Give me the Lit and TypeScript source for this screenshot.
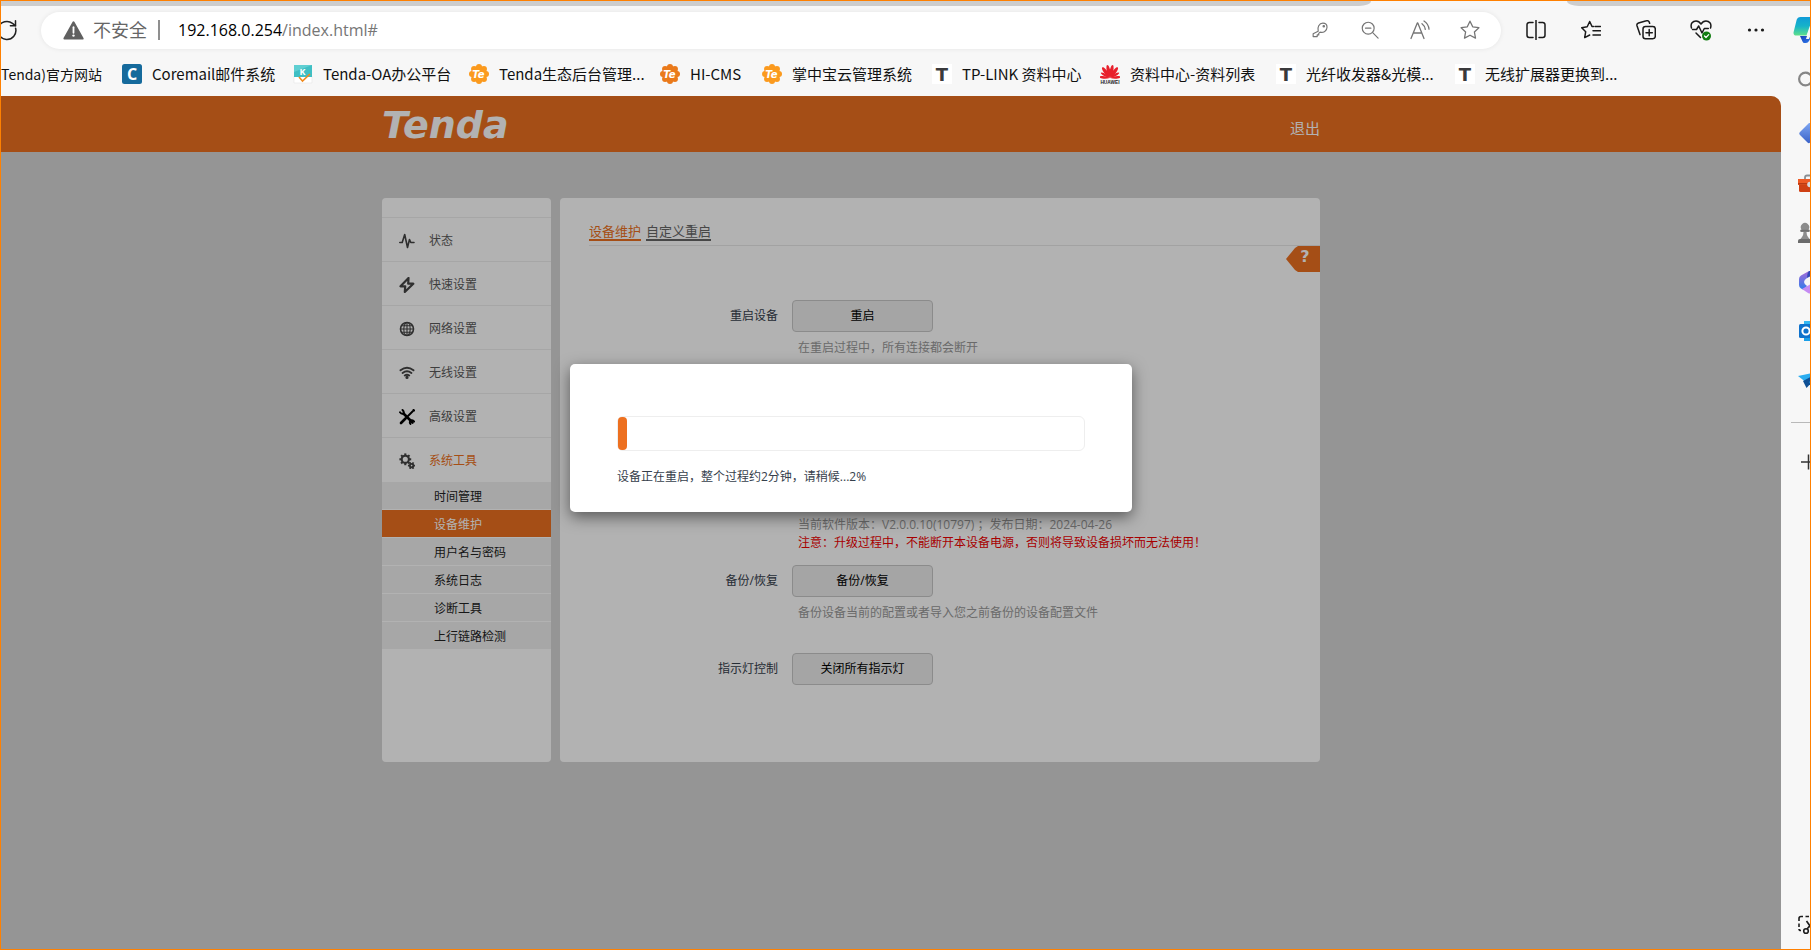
import { LitElement, html, css, svg, nothing } from "lit";
import { customElement, property, state } from "lit/decorators.js";
import { classMap } from "lit/directives/class-map.js";
import { styleMap } from "lit/directives/style-map.js";

/* ---------- shared base ---------- */

const base = css`
  * {
    box-sizing: border-box;
  }
  button {
    font: inherit;
    color: inherit;
    margin: 0;
    padding: 0;
    border: 0;
    background: none;
    cursor: pointer;
  }
  a {
    color: inherit;
    text-decoration: none;
  }
  svg {
    display: block;
    flex: none;
  }
`;

/* ---------- toolbar icons ---------- */

const line = (body: unknown, size = 20, width = 1.3) => html`<svg
  width=${size}
  height=${size}
  viewBox="0 0 20 20"
  fill="none"
  stroke="currentColor"
  stroke-width=${width}
  stroke-linecap="round"
  stroke-linejoin="round"
  aria-hidden="true"
>
  ${body}
</svg>`;

const icons = {
  refresh: html`<svg width="17" height="22" viewBox="5 0 17 22" fill="none" stroke="#222" stroke-width="1.5" stroke-linecap="round" aria-hidden="true">
    <path d="M19.6 9.2A9 9 0 1 1 16.5 4.4L19.4 6.6" />
    <path d="M19.5 1.8V6.7H14.4" />
  </svg>`,
  warning: html`<svg width="21" height="19" viewBox="0 0 21 19" aria-hidden="true">
    <path d="M10.5 1.3 19.6 17.6H1.4Z" fill="#606060" stroke="#606060" stroke-width="2" stroke-linejoin="round" />
    <path d="M10.5 6.2v5.6" stroke="#fff" stroke-width="1.8" stroke-linecap="round" />
    <circle cx="10.5" cy="14.6" r="1.2" fill="#fff" />
  </svg>`,
  key: line(
    svg`<path d="M8 11.4C6.8 7 9 2.4 13.2 2.4c2.700 0 4.600 1.900 4.600 4.500 0 4.200-4.200 6.500-7.700 5.500L8.600 13.800v1.700H6.900v1.800H2.400v-3.100z"/><circle cx="14.200" cy="5.900" r=".8"/>`,
    18,
  ),
  zoomOut: line(svg`<circle cx="8" cy="8" r="6.600"/><path d="M5 8h6M13 13l6 6"/>`, 18),
  readAloud: line(
    svg`<path d="M1 18.500 7.300 3h.5L14 18.500M3.200 13h8.600M12 3.700c2 1.500 3 3.200 3.300 5.600M14 1c3 2 4.700 4.500 5 8.200"/>`,
  ),
  star: line(
    svg`<path d="m10 1.200 2.700 5.600 6.200.9-4.500 4.300 1.100 6.100L10 15.200l-5.500 2.900L5.600 12 1.100 7.700l6.200-.9z"/>`,
  ),
  split: line(
    svg`<path d="M10 .5v19M7 2.500H3.200A2.200 2.200 0 0 0 1 4.700v10.600a2.200 2.200 0 0 0 2.200 2.200H7M13 2.500h3.800A2.200 2.200 0 0 1 19 4.700v10.600a2.200 2.200 0 0 1-2.200 2.200H13"/>`,
    20,
    1.5,
  ),
  favorites: line(
    svg`<path d="M12.500 6.500H11L8.700 1.500 6.200 6.800.7 7.700l4 4-1 5.900 5-2.600"/><path d="M14 6.500h5.500M12 10.800h7.500M12 15h7.500"/>`,
    20,
    1.5,
  ),
  collections: line(
    svg`<rect x="7" y="6.500" width="12.300" height="12.300" rx="2.500"/><path d="M13.200 9.500v6.300M10 12.700h6.300M4 14.600 1 5.800A2.300 2.300 0 0 1 2.500 3L10.400.8a2.300 2.300 0 0 1 2.900 1.500l.3 1"/>`,
    20,
    1.5,
  ),
  health: html`<svg width="22" height="22" viewBox="0 0 22 22" fill="none" stroke="currentColor" stroke-width="1.500" stroke-linecap="round" stroke-linejoin="round" aria-hidden="true">
    <path d="M1.500 9C0 4.500 3 2 6 2c2 0 3.700 1 5 3 1.300-2 3-3 5-3 3 0 6 2.500 4.500 7" />
    <path d="M2.500 10.500h4l2.200-3.500 3.300 7 2.300-4.500h4M6 14l4.500 4.500" />
    <circle cx="16.500" cy="17" r="4.500" fill="#107c10" stroke="none" />
    <path d="m14.500 17 1.500 1.500 2.700-2.800" stroke="#fff" stroke-width="1.200" />
  </svg>`,
  more: html`<svg width="20" height="20" viewBox="0 0 20 20" fill="currentColor" aria-hidden="true">
    <circle cx="3.500" cy="10" r="1.600" /><circle cx="10" cy="10" r="1.600" /><circle cx="16.500" cy="10" r="1.600" />
  </svg>`,
  copilot: html`<svg width="28" height="28" viewBox="0 0 28 28" aria-hidden="true">
    <defs>
      <linearGradient id="cpA" x1="0" y1="0" x2="0" y2="1">
        <stop offset="0" stop-color="#0f9bd8" /><stop offset=".5" stop-color="#16b3c9" /><stop offset="1" stop-color="#5fe08a" />
      </linearGradient>
      <linearGradient id="cpB" x1="0" y1="0" x2="1" y2="1">
        <stop offset="0" stop-color="#1b3fb5" /><stop offset="1" stop-color="#2c7cf0" />
      </linearGradient>
    </defs>
    <path d="M7 20h12l-3 5q-1 2-3 2h-1.500q-1.500 0-2-1.500z" fill="url(#cpB)" />
    <path d="M7.500 1H20l-6.500 18.500H3.500Q0 19.500.6 16L3.600 4Q4.500 1 7.500 1z" fill="url(#cpA)" />
    <path d="M18 8l-5 15h3l6-15z" fill="#f7f7f7" />
  </svg>`,
};

/* ---------- bookmark icons ---------- */

const petals = (n: number, r: number) =>
  Array.from({ length: n }, (_, i) => {
    const a = (i / n) * Math.PI * 2 - Math.PI / 2;
    return svg`<circle cx=${10 + r * Math.cos(a)} cy=${10 + r * Math.sin(a)} r="3"/>`;
  });

const tendaBadge = (color: string) => html`<svg width="20" height="20" viewBox="0 0 20 20" aria-hidden="true">
  <g fill=${color}><circle cx="10" cy="10" r="8" />${petals(8, 7)}</g>
  <text x="9.500" y="14" text-anchor="middle" font-family="DejaVu Sans" font-size="10" font-weight="700" font-style="italic" fill="#fff">Te</text>
</svg>`;

const favicons: Record<string, unknown> = {
  coremail: html`<svg width="20" height="20" viewBox="0 0 20 20" aria-hidden="true">
    <rect width="20" height="20" rx="2.500" fill="#156a9c" />
    <text x="10" y="15.500" text-anchor="middle" font-family="Open Sans" font-size="16" font-weight="700" fill="#fff">C</text>
  </svg>`,
  oa: html`<svg width="20" height="20" viewBox="0 0 20 20" aria-hidden="true">
    <path d="M1 12h18v7H1z" fill="#fff" stroke="#e6e6e6" stroke-width=".6" />
    <path d="M1 1h18v12H1z" fill="#3fbfc4" />
    <path d="M1 1h18L1 8z" fill="#5fcfd2" />
    <text x="9.500" y="10.500" text-anchor="middle" font-family="Open Sans" font-size="9" font-weight="700" fill="#fff">K</text>
    <path d="m6 13 3.500 4L17 10" fill="none" stroke="#f08a1d" stroke-width="1.600" />
  </svg>`,
  tenda: tendaBadge("#fb9a1e"),
  hicms: tendaBadge("#ea7a1b"),
  tplink: html`<svg width="20" height="20" viewBox="0 0 20 20" aria-hidden="true">
    <rect width="20" height="20" fill="#fff" />
    <text x="10" y="16.500" text-anchor="middle" font-family="DejaVu Sans" font-size="18" font-weight="700" fill="#3a3a3c">T</text>
  </svg>`,
  huawei: html`<svg width="20" height="20" viewBox="0 0 20 20" aria-hidden="true">
    <g fill="#e8202c">
      ${[-84, -60, -36, -12, 12, 36, 60, 84].map(
        (a) => svg`<path d="M10 13.800C8 9.500 7.800 4.500 9.100 1.500Q10 0 10.900 1.500C12.200 4.500 12 9.500 10 13.800z" transform=${`rotate(${a} 10 14) ${Math.abs(a) > 50 ? "translate(2 2.8) scale(.8)" : ""}`} />`,
      )}
    </g>
    <text x="10" y="20" text-anchor="middle" font-family="Liberation Sans" font-size="4.800" font-weight="700" fill="#222">HUAWEI</text>
  </svg>`,
};

/* ---------- browser chrome ---------- */

@customElement("browser-toolbar")
class BrowserToolbar extends LitElement {
  static styles = [
    base,
    css`
      :host {
        display: block;
        font-family: "Open Sans", "Noto Sans CJK SC", sans-serif;
      }
      .tabs {
        display: flex;
        height: 5px;
      }
      .tabs-left,
      .tabs-right {
        background: #cdcdcd;
      }
      .tabs-left {
        flex: 1;
        border-bottom-right-radius: 12px 5px;
      }
      .tabs-active {
        width: 196px;
      }
      .tabs-right {
        width: 243px;
        border-bottom-left-radius: 12px 5px;
      }
      .bar {
        display: flex;
        align-items: center;
        height: 48px;
        overflow: hidden;
      }
      .reload {
        width: 40px;
        flex: none;
      }
      .address {
        flex: 1;
        min-width: 0;
        height: 37px;
        display: flex;
        align-items: center;
        padding: 0 6px 0 22px;
        border-radius: 19px;
        background: #fff;
        box-shadow: 0 0 5px rgba(0, 0, 0, 0.08);
      }
      .security {
        display: flex;
        align-items: center;
        gap: 9px;
        color: #666;
        font-size: 18px;
        line-height: 24px;
        white-space: nowrap;
      }
      .divider {
        width: 2px;
        height: 20px;
        margin: 0 18px 0 11px;
        background: #8f8f8f;
      }
      .url {
        flex: 1;
        outline: 0;
        font-size: 16px;
        line-height: 24px;
        color: #000;
        white-space: nowrap;
      }
      .path {
        color: #767676;
      }
      .inner {
        width: 50px;
        display: flex;
        justify-content: center;
        color: #757575;
      }
      .actions {
        display: flex;
        align-items: center;
        margin-left: 7px;
        color: #1a1a1a;
      }
      .action {
        width: 55px;
        display: flex;
        justify-content: center;
      }
      .copilot {
        width: 27px;
        padding-left: 10px;
        overflow: hidden;
      }
    `,
  ];

  render() {
    return html`
      <div class="tabs">
        <div class="tabs-left"></div>
        <div class="tabs-active"></div>
        <div class="tabs-right"></div>
      </div>
      <div class="bar">
        <button class="reload" aria-label="刷新">${icons.refresh}</button>
        <div class="address">
          <button class="security">${icons.warning}<span>不安全</span></button>
          <span class="divider"></span>
          <div class="url" role="textbox" contenteditable="true" spellcheck="false" aria-label="地址栏"><span>192.168.0.254</span><span class="path">/index.html#</span></div>
          <button class="inner" aria-label="密码">${icons.key}</button>
          <button class="inner" aria-label="缩小">${icons.zoomOut}</button>
          <button class="inner" aria-label="朗读">${icons.readAloud}</button>
          <button class="inner" aria-label="收藏">${icons.star}</button>
        </div>
        <div class="actions">
          <button class="action" aria-label="分屏">${icons.split}</button>
          <button class="action" aria-label="收藏夹">${icons.favorites}</button>
          <button class="action" aria-label="集锦">${icons.collections}</button>
          <button class="action" aria-label="浏览器概要">${icons.health}</button>
          <button class="action" aria-label="更多">${icons.more}</button>
          <button class="copilot" aria-label="Copilot">${icons.copilot}</button>
        </div>
      </div>
    `;
  }
}

@customElement("bookmarks-bar")
class BookmarksBar extends LitElement {
  static styles = [
    base,
    css`
      :host {
        display: grid;
        grid-template-columns: 121px 171px 176px 191px 102px 170px 168px 176px 179px 1fr;
        align-items: center;
        height: 42px;
        padding-bottom: 2px;
        overflow: hidden;
        font: 15px/20px "Noto Sans CJK SC", sans-serif;
        color: #111;
      }
      .bookmark {
        display: flex;
        align-items: center;
        gap: 10px;
        min-width: 0;
        white-space: nowrap;
      }
      .clipped {
        justify-content: flex-end;
        padding-right: 20px;
        font-size: 14px;
      }
    `,
  ];

  private items: [string, string][] = [
    ["", "Tenda)官方网站"],
    ["coremail", "Coremail邮件系统"],
    ["oa", "Tenda-OA办公平台"],
    ["tenda", "Tenda生态后台管理..."],
    ["hicms", "HI-CMS"],
    ["tenda", "掌中宝云管理系统"],
    ["tplink", "TP-LINK 资料中心"],
    ["huawei", "资料中心-资料列表"],
    ["tplink", "光纤收发器&光模..."],
    ["tplink", "无线扩展器更换到..."],
  ];

  render() {
    return this.items.map(
      ([icon, label]) => html`<a href="#" class=${classMap({ bookmark: true, clipped: !icon })}>
        ${icon ? favicons[icon] : nothing}<span>${label}</span>
      </a>`,
    );
  }
}

@customElement("browser-rail")
class BrowserRail extends LitElement {
  static styles = [
    base,
    css`
      :host {
        display: flex;
        flex-direction: column;
        width: 29px;
        overflow: hidden;
      }
      .item {
        flex: none;
        height: 49px;
        padding-left: 17px;
        display: flex;
        align-items: center;
      }
      .search {
        margin-bottom: 7px;
      }
      .rule {
        flex: none;
        height: 1px;
        margin: 18px 0 14px 10px;
        background: #b9b9b9;
      }
      .snip {
        margin-top: auto;
      }
    `,
  ];

  private apps: [string, unknown][] = [
    ["购物", svg`<defs><linearGradient id="tag" x1="0" y1="0" x2="0" y2="1"><stop offset="0" stop-color="#7ea6f2"/><stop offset="1" stop-color="#3a62c8"/></linearGradient></defs><path d="M2 9 11 0h11v12L11.500 20Q10.500 20.500 9.500 19.500L2 12Q.5 10.500 2 9z" fill="url(#tag)"/>`],
    ["工具", svg`<path d="M7 7V5.500Q7 3.500 9 3.500h6q2 0 2 2V7" fill="none" stroke="#8a8f94" stroke-width="1.800"/><path d="M0 7h24v6H0z" fill="#ee5a24"/><path d="M1 13h22v5.500Q23 20 21.500 20h-19Q1 20 1 18.500z" fill="#cf4013"/><path d="M0 11h24v1.500H0z" fill="#b93a12"/><circle cx="12" cy="12.500" r="2.800" fill="#d8dadd"/>`],
    ["游戏", svg`<path d="M2 18.500 4 16q1.500-2 1.500-5H3Q1.500 9.500 3.500 8.500a4.200 4.200 0 1 1 7 0q2 1 .5 2.500H8.500q0 3 1.500 5l2 2.500z" fill="#8c8c8c"/><path d="M2.500 8.800h9v1.800h-9z" fill="#6f6f6f"/><path d="M0 20q0-2 2-2h10q2 0 2 2v2H0z" fill="#6b6b6b"/>`],
    ["Microsoft 365", svg`<defs><linearGradient id="mA" x1="0" y1="0" x2="0" y2="1"><stop offset="0" stop-color="#a56cd8"/><stop offset="1" stop-color="#2f7bea"/></linearGradient></defs><path d="M11 1 3 5.500Q1 6.600 1 9v6q0 2 2 3.500l3 1.500 3-4q-3-2-3-4t3-4z" fill="url(#mA)"/><path d="M11 1q-2 2-2 7l5-2.500V1z" fill="#3347b8"/><path d="M4 19l9-5 9 4-8 5q-2 1-4 0z" fill="#c58cf3"/>`],
    ["Outlook", svg`<path d="M6 2h16v20H6z" fill="#1a9fe8"/><path d="M6 2h16v4H6z" fill="#34b8f2"/><rect x="1" y="5" width="14" height="14" rx="1.500" fill="#0f72cc"/><circle cx="8" cy="12" r="3.600" fill="none" stroke="#fff" stroke-width="2"/>`],
    ["Drop", svg`<path d="M0 8 24 3 9 15z" fill="#2badf0"/><path d="M5 13 24 3 8.500 20z" fill="#0e4f94"/><path d="m11 14 13-11-8 17z" fill="#1f8fe0"/>`],
  ];

  render() {
    return html`
      <button class="item search" aria-label="搜索">
        <svg width="24" height="24" viewBox="0 0 24 24" fill="none" stroke="#868686" stroke-width="2.200"><circle cx="7.500" cy="12" r="6.400" /><path d="m12 17 6 6" /></svg>
      </button>
      ${this.apps.map(
        ([name, art]) => html`<button class="item" aria-label=${name}><svg width="24" height="24" viewBox="0 0 24 24">${art}</svg></button>`,
      )}
      <div class="rule"></div>
      <button class="item" aria-label="添加">
        <svg width="24" height="24" viewBox="0 0 24 24" stroke="#333" stroke-width="1.500"><path d="M3 12h15M10.500 4.500v15" /></svg>
      </button>
      <button class="item snip" aria-label="截图">
        <svg width="24" height="24" viewBox="0 0 24 24" fill="none" stroke="#1c1c1c" stroke-width="1.600">
          <path d="M1 8V5.500Q1 3.500 3 3.500h2M7.500 3.500H11M1 10.500V14M1 16q0 1.500 2 1.500M8.500 8l7 10M16 8 9 16" />
          <circle cx="8" cy="18" r="2.300" />
        </svg>
      </button>
    `;
  }
}

/* ---------- router admin page ---------- */

const menuIcon = (body: unknown) => html`<svg width="16" height="16" viewBox="0 0 16 16" fill="none" stroke="#444" stroke-width="1.600" stroke-linejoin="round" stroke-linecap="round" aria-hidden="true">${body}</svg>`;

const cog = (cx: number, cy: number, r: number, teeth: number, w: number) =>
  svg`<circle cx=${cx} cy=${cy} r=${r} stroke-width=${w}/>${Array.from({ length: teeth }, (_, i) => {
    const a = (i / teeth) * Math.PI * 2;
    const p = (k: number) => `${cx + k * Math.cos(a)} ${cy + k * Math.sin(a)}`;
    return svg`<path stroke-linecap="butt" stroke-width=${w} d=${`M${p(r)}L${p(r + w * 1.1)}`}/>`;
  })}`;

interface MenuEntry {
  label: string;
  icon: unknown;
}

@customElement("side-menu")
class SideMenu extends LitElement {
  static styles = [
    base,
    css`
      :host {
        display: block;
        width: 169px;
        flex: none;
        padding-top: 19px;
        border-radius: 4px;
        background: #fff;
        overflow: hidden;
      }
      .entry {
        display: flex;
        align-items: center;
        gap: 14px;
        height: 44px;
        padding: 2px 0 0 17px;
        border-top: 1px solid #eee;
        color: #5a5a5a;
      }
      .open {
        color: #ed7020;
      }
      .sub {
        margin-top: 1px;
      }
      .link {
        display: block;
        height: 28px;
        padding-left: 52px;
        line-height: 30px;
        border-bottom: 1px solid #fff;
        background: #f0f0f0;
        color: #222;
      }
      .current {
        background: #ed7020;
        color: #fff;
      }
    `,
  ];

  private entries: MenuEntry[] = [
    { label: "状态", icon: menuIcon(svg`<path d="M.8 9.500h2.400L5.700 1.500l2.800 13 2-8 1.300 3h3.200"/>`) },
    { label: "快速设置", icon: menuIcon(svg`<path stroke-width="2.200" d="M9.500 1 1.500 9.300h4.700L5.800 15l8.500-8.300H9.200z"/>`) },
    { label: "网络设置", icon: menuIcon(svg`<circle cx="8" cy="8" r="6.500"/><g stroke-width="1.100"><ellipse cx="8" cy="8" rx="3.200" ry="6.500"/><path d="M8 1.500v13M1.500 8h13M2.500 4.700h11M2.500 11.300h11"/></g>`) },
    { label: "无线设置", icon: menuIcon(svg`<path stroke-width="1.900" d="M1.500 5.300q6.500-5 13 0M3.600 8q4.400-3.400 8.800 0M5.800 10.500q2.200-1.700 4.400 0"/><circle cx="8" cy="12.400" r=".8" fill="#444"/>`) },
    { label: "高级设置", icon: menuIcon(svg`<g stroke="#000"><path stroke-width="2.600" d="m4.500 4.500 9 9M2 14l4.500-4.500"/><path stroke-width="1.900" d="M9 7l5-5M14.500.8 15.200 1.500M1 3.200q1.500 2.200 3.500 1.500Q5.500 3 3.500 1M11.500 15q-1.500-2 .3-3.500 2-.8 3.400 1"/></g>`) },
    { label: "系统工具", icon: menuIcon(svg`${cog(6.300, 6.300, 3.600, 8, 2.100)}${cog(12.600, 12.600, 1.700, 6, 1.800)}`) },
  ];

  private links = ["时间管理", "设备维护", "用户名与密码", "系统日志", "诊断工具", "上行链路检测"];

  @state() private current = "设备维护";

  render() {
    return html`
      <nav>
        ${this.entries.map(
          (e) => html`<a href="#" class=${classMap({ entry: true, open: e.label === "系统工具" })}>${e.icon}<span>${e.label}</span></a>`,
        )}
        <div class="sub">
          ${this.links.map(
            (l) => html`<a href="#" class=${classMap({ link: true, current: l === this.current })} @click=${() => (this.current = l)}>${l}</a>`,
          )}
        </div>
      </nav>
    `;
  }
}

@customElement("maintenance-panel")
class MaintenancePanel extends LitElement {
  static styles = [
    base,
    css`
      :host {
        flex: 1;
        display: flex;
        flex-direction: column;
        padding: 23px 0 39px 29px;
        border-radius: 4px;
        background: #fff;
      }
      .tabs {
        display: flex;
        gap: 5px;
        padding-bottom: 4px;
        border-bottom: 1px solid #e9e9e9;
        font-size: 13px;
        line-height: 20px;
      }
      .tab {
        height: 20px;
        border-bottom: 2px solid #666;
        color: #666;
      }
      .selected {
        border-color: #ed7020;
        color: #ed7020;
      }
      .help {
        align-self: flex-end;
        width: 34px;
        height: 26px;
        padding: 0 0 4px 4px;
        background: #ed7020;
        clip-path: polygon(0 50%, 9px 2px, 12px 0, 100% 0, 100% 100%, 12px 100%, 9px 24px);
        color: #fff;
        font: bold 16px/22px "DejaVu Sans", sans-serif;
        text-align: center;
      }
      .form {
        padding-top: 28px;
      }
      .row {
        display: grid;
        grid-template-columns: 189px 1fr;
        column-gap: 14px;
        margin-bottom: 31px;
      }
      .label {
        line-height: 32px;
        text-align: right;
        color: #36404c;
      }
      .button {
        display: block;
        width: 141px;
        height: 32px;
        margin-bottom: 7px;
        border: 1px solid #c8c8c8;
        border-radius: 4px;
        background: #ececec;
        color: #000;
      }
      .notes {
        padding-left: 6px;
        line-height: 18px;
        color: #999;
      }
      .upgrade {
        margin-top: 159px;
        margin-bottom: 13px;
      }
      .value {
        grid-column: 2;
      }
      .note {
        margin: 0;
      }
      .alert {
        color: #f00000;
      }
    `,
  ];

  private row(id: string, label: string, action: string, hint?: string) {
    return html`<div class="row">
      <label class="label" for=${id}>${label}</label>
      <div class="value">
        <button class="button" id=${id}>${action}</button>
        ${hint ? html`<div class="notes">${hint}</div>` : nothing}
      </div>
    </div>`;
  }

  render() {
    return html`
      <div class="tabs">
        <a href="#" class="tab selected">设备维护</a>
        <a href="#" class="tab">自定义重启</a>
      </div>
      <button class="help" aria-label="帮助">?</button>
      <div class="form">
        ${this.row("reboot", "重启设备", "重启", "在重启过程中，所有连接都会断开")}
        <div class="row upgrade">
          <div class="value notes">
            <p class="note">当前软件版本：V2.0.0.10(10797) ；发布日期：2024-04-26</p>
            <p class="note alert">注意：升级过程中，不能断开本设备电源，否则将导致设备损坏而无法使用！</p>
          </div>
        </div>
        ${this.row("backup", "备份/恢复", "备份/恢复", "备份设备当前的配置或者导入您之前备份的设备配置文件")}
        ${this.row("led", "指示灯控制", "关闭所有指示灯")}
      </div>
    `;
  }
}

@customElement("progress-dialog")
class ProgressDialog extends LitElement {
  @property({ type: Number }) percent = 0;

  static styles = [
    base,
    css`
      :host {
        display: block;
        width: 562px;
        padding: 52px 47px 25px;
        border-radius: 5px;
        background: #fff;
        box-shadow: 0 5px 15px rgba(0, 0, 0, 0.5);
      }
      .track {
        height: 35px;
        border: 1px solid #eee;
        border-radius: 6px;
      }
      .fill {
        height: 100%;
        border-radius: 4px;
        background: #ed7020;
      }
      .message {
        margin: 16px 0 0;
        line-height: 20px;
        color: #36404c;
      }
    `,
  ];

  render() {
    return html`
      <div class="track" role="progressbar" aria-valuenow=${this.percent} aria-valuemin="0" aria-valuemax="100">
        <div class="fill" style=${styleMap({ width: `${this.percent}%` })}></div>
      </div>
      <p class="message">设备正在重启，整个过程约2分钟，请稍候...${this.percent}%</p>
    `;
  }
}

@customElement("router-page")
class RouterPage extends LitElement {
  static styles = [
    base,
    css`
      :host {
        position: relative;
        display: flex;
        flex-direction: column;
        overflow: hidden;
        border-top-right-radius: 10px;
        background: #d6d6d6;
        font: 12px/18px "Open Sans", "Noto Sans CJK SC", sans-serif;
      }
      .header {
        height: 56px;
        padding-right: 80px;
        background: #ed7020;
      }
      .wrap {
        display: flex;
        gap: 9px;
        width: 938px;
        margin: 0 auto;
      }
      .top {
        height: 100%;
        justify-content: space-between;
        align-items: center;
        color: #fff;
      }
      .logo {
        padding-top: 2px;
        font: italic bold 38px/54px "DejaVu Sans", sans-serif;
      }
      .logout {
        padding-top: 8px;
        font-size: 15px;
        line-height: 20px;
      }
      .body {
        padding: 46px 80px 0 0;
      }
      .shade {
        position: absolute;
        inset: 0;
        display: flex;
        justify-content: center;
        align-items: flex-start;
        padding: 268px 80px 0 0;
        background: rgba(0, 0, 0, 0.3);
      }
    `,
  ];

  render() {
    return html`
      <header class="header">
        <div class="wrap top">
          <span class="logo">Tenda</span>
          <a href="#" class="logout">退出</a>
        </div>
      </header>
      <main class="body">
        <div class="wrap">
          <side-menu></side-menu>
          <maintenance-panel></maintenance-panel>
        </div>
      </main>
      <div class="shade">
        <progress-dialog role="dialog" aria-label="重启" .percent=${2}></progress-dialog>
      </div>
    `;
  }
}

@customElement("app-root")
class AppRoot extends LitElement {
  static styles = [
    base,
    css`
      :host {
        display: flex;
        flex-direction: column;
        box-sizing: border-box;
        min-height: 100vh;
        border: 1px solid #ff8000;
        background: #f7f7f7;
        overflow: hidden;
      }
      .frame {
        flex: 1;
        display: flex;
      }
      .view {
        flex: 1;
        min-width: 0;
        display: flex;
        flex-direction: column;
      }
      .page {
        flex: 1;
      }
    `,
  ];

  render() {
    return html`
      <browser-toolbar></browser-toolbar>
      <div class="frame">
        <div class="view">
          <bookmarks-bar></bookmarks-bar>
          <router-page class="page"></router-page>
        </div>
        <browser-rail></browser-rail>
      </div>
    `;
  }
}
